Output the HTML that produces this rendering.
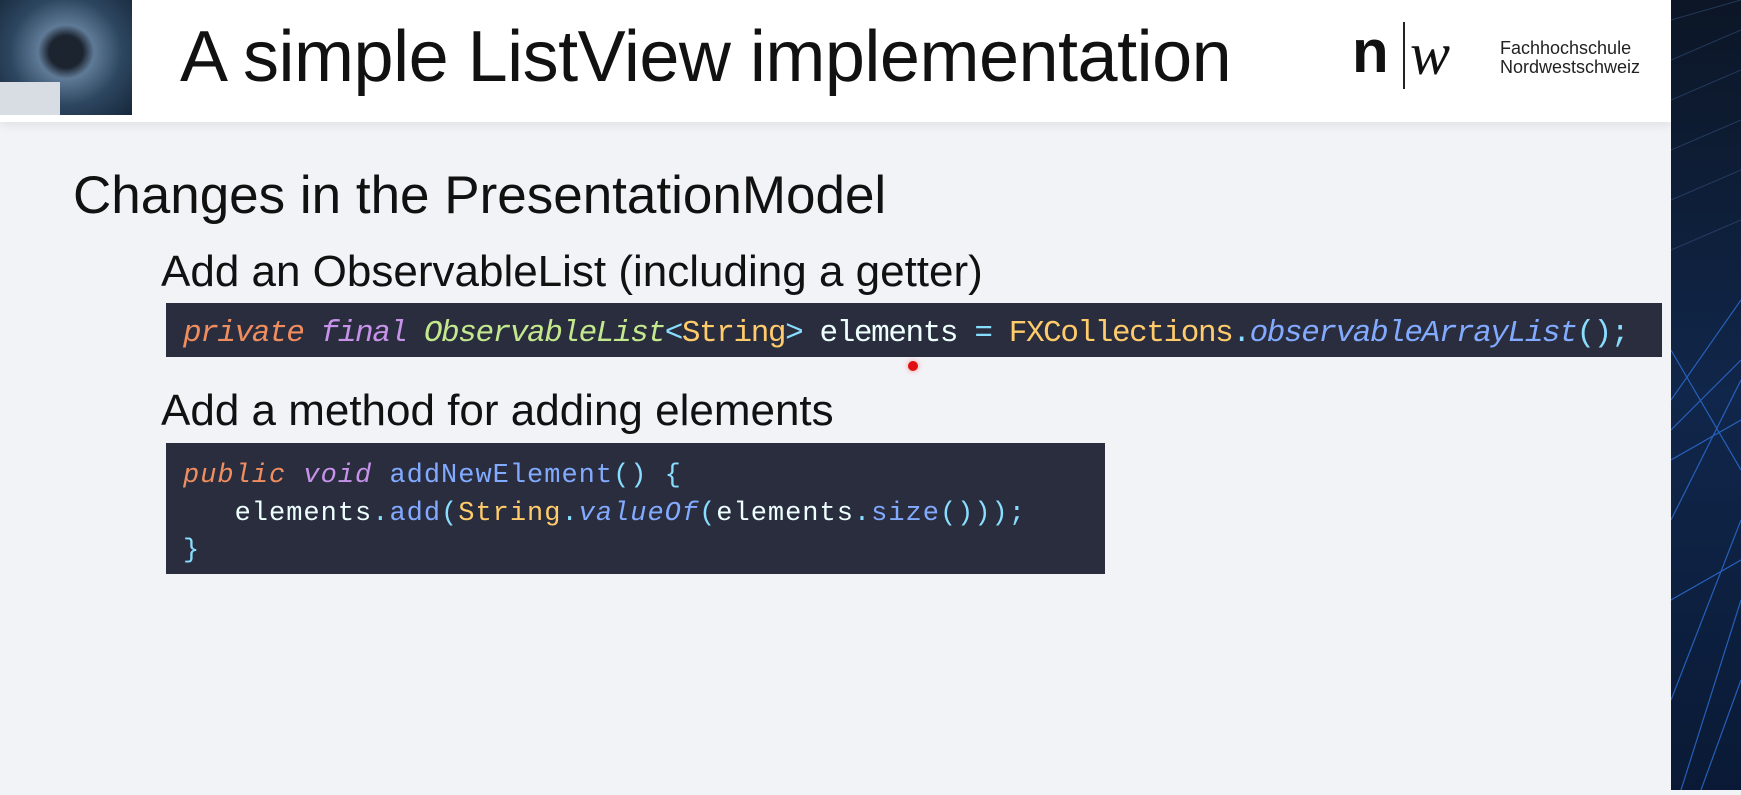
<!DOCTYPE html>
<html><head><meta charset="utf-8"><style>
*{margin:0;padding:0;box-sizing:border-box}
body{width:1741px;height:790px;overflow:hidden;background:#f2f3f7;position:relative;font-family:"Liberation Sans",sans-serif}
.hdr{position:absolute;left:0;top:0;width:1671px;height:122px;background:#fff;box-shadow:0 3px 10px rgba(0,0,0,.08)}
.pic{position:absolute;left:0;top:0;width:132px;height:115px;background:radial-gradient(ellipse at 50% 45%,#1c2430 0 18%,#5f7a96 30%,#2d4660 60%,#16273a 100%)}
.pic:after{content:"";position:absolute;left:0;top:82px;width:60px;height:33px;background:#d8dde3}
.title{position:absolute;left:180px;top:16px;font-size:72px;color:#111;letter-spacing:-0.5px;white-space:nowrap}
.n{position:absolute;left:1352px;top:22px;font-size:60px;font-weight:bold;color:#111;line-height:60px}
.w{position:absolute;left:1410px;top:24px;font-size:60px;font-style:italic;color:#111;font-family:"Liberation Serif",serif;line-height:60px}
.bar{position:absolute;left:1403px;top:22px;width:1.5px;height:67px;background:#222}
.fh{position:absolute;left:1500px;top:39px;font-size:18px;line-height:19px;color:#222}
.strip{position:absolute;left:1671px;top:0;width:70px;height:790px;background:linear-gradient(180deg,#0c1626,#10264a 50%,#0a1a36)}
.h1{position:absolute;left:73px;top:165px;font-size:53px;color:#111;white-space:nowrap}
.h2{position:absolute;font-size:44px;color:#111;left:161px;white-space:nowrap}
.code{position:absolute;background:#292d3e;font-family:"Liberation Mono",monospace;font-size:27px;color:#eeffff;white-space:pre;padding-left:17px}
.k{color:#f08d5f;font-style:italic}.p{color:#c792ea;font-style:italic}.g{color:#c3e88d;font-style:italic}.y{color:#ffcb6b}.c{color:#89ddff}.b{color:#82aaff}.bi{color:#82aaff;font-style:italic}
.dot{position:absolute;left:908px;top:361px;width:10px;height:10px;border-radius:50%;background:#e01010;box-shadow:0 0 6px rgba(255,0,0,.4)}
</style></head><body>
<div class="hdr"></div>
<div class="pic"></div>
<div class="title">A simple ListView implementation</div>
<div class="n">n</div>
<div class="w">w</div>
<div class="bar"></div>
<div class="fh">Fachhochschule<br>Nordwestschweiz</div>
<div class="strip"><svg width="70" height="790"><g stroke="#2d6fd8" stroke-width="1.2" opacity=".8" fill="none"><path d="M0 400L70 300M0 430L70 360M0 460L70 420M0 520L70 380M10 790L70 600M0 700L70 520M30 790L70 680M0 600L70 560M0 350L70 470"/></g><g stroke="#3a5a8a" stroke-width="1" opacity=".5"><path d="M0 20L70 0M0 60L70 30M0 100L70 70M0 150L70 120M0 200L70 170M0 250L70 220"/></g></svg></div>
<div class="h1">Changes in the PresentationModel</div>
<div class="h2" style="top:247px">Add an ObservableList (including a getter)</div>
<div class="code" style="left:166px;top:303px;width:1496px;height:54px;padding-top:4px;line-height:54px;font-size:31px;letter-spacing:-1.4px"><span class="k">private</span> <span class="p">final</span> <span class="g">ObservableList</span><span class="c">&lt;</span><span class="y">String</span><span class="c">&gt;</span> elements <span class="c">=</span> <span class="y">FXCollections</span><span class="c">.</span><span class="bi">observableArrayList</span><span class="c">();</span></div>
<div class="dot"></div>
<div class="h2" style="top:386px">Add a method for adding elements</div>
<div class="code" style="left:166px;top:443px;width:939px;height:131px;padding-top:15px;line-height:37.5px;font-size:27px;letter-spacing:1px"><span class="k">public</span> <span class="p">void</span> <span class="b">addNewElement</span><span class="c">() {</span>
   elements<span class="c">.</span><span class="b">add</span><span class="c">(</span><span class="y">String</span><span class="c">.</span><span class="bi">valueOf</span><span class="c">(</span>elements<span class="c">.</span><span class="b">size</span><span class="c">()));</span>
<span class="c">}</span></div>
</body></html>
